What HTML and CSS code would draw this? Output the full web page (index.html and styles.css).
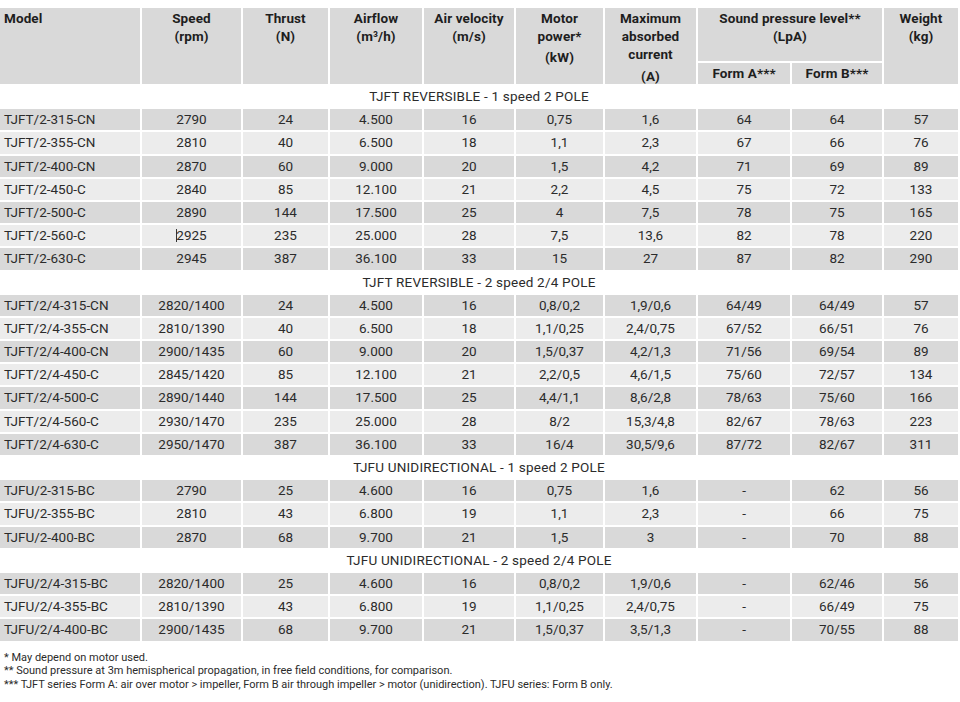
FILE: index.html
```html
<!DOCTYPE html>
<html lang="en">
<head>
<meta charset="utf-8">
<title>TJFT / TJFU jet fans – technical data</title>
<link rel="stylesheet" href="styles.css">
</head>
<body>
<div class="spec">
  <div class="grid">
    <div class="row head">
      <div class="cell hd model"><span class="l">Model</span></div>
      <div class="cell hd tall"><span class="l">Speed</span><span class="l">(rpm)</span></div>
      <div class="cell hd tall"><span class="l">Thrust</span><span class="l">(N)</span></div>
      <div class="cell hd tall"><span class="l">Airflow</span><span class="l">(m³/h)</span></div>
      <div class="cell hd tall"><span class="l">Air velocity</span><span class="l">(m/s)</span></div>
      <div class="cell hd tall"><span class="l">Motor</span><span class="l">power*</span><span class="l gap">(kW)</span></div>
      <div class="cell hd tall"><span class="l">Maximum</span><span class="l">absorbed</span><span class="l">current</span><span class="l gap2">(A)</span></div>
      <div class="cell hd wide"><span class="l">Sound pressure level**</span><span class="l">(LpA)</span></div>
      <div class="cell hd tall"><span class="l">Weight</span><span class="l">(kg)</span></div>
      <div class="cell hd sub">Form A***</div>
      <div class="cell hd sub">Form B***</div>
    </div>

    <div class="section">TJFT REVERSIBLE - 1 speed 2 POLE</div>
    <div class="row dark"><div class="cell model">TJFT/2-315-CN</div><div class="cell">2790</div><div class="cell">24</div><div class="cell">4.500</div><div class="cell">16</div><div class="cell">0,75</div><div class="cell">1,6</div><div class="cell">64</div><div class="cell">64</div><div class="cell">57</div></div>
    <div class="row light"><div class="cell model">TJFT/2-355-CN</div><div class="cell">2810</div><div class="cell">40</div><div class="cell">6.500</div><div class="cell">18</div><div class="cell">1,1</div><div class="cell">2,3</div><div class="cell">67</div><div class="cell">66</div><div class="cell">76</div></div>
    <div class="row dark"><div class="cell model">TJFT/2-400-CN</div><div class="cell">2870</div><div class="cell">60</div><div class="cell">9.000</div><div class="cell">20</div><div class="cell">1,5</div><div class="cell">4,2</div><div class="cell">71</div><div class="cell">69</div><div class="cell">89</div></div>
    <div class="row light"><div class="cell model">TJFT/2-450-C</div><div class="cell">2840</div><div class="cell">85</div><div class="cell">12.100</div><div class="cell">21</div><div class="cell">2,2</div><div class="cell">4,5</div><div class="cell">75</div><div class="cell">72</div><div class="cell">133</div></div>
    <div class="row dark"><div class="cell model">TJFT/2-500-C</div><div class="cell">2890</div><div class="cell">144</div><div class="cell">17.500</div><div class="cell">25</div><div class="cell">4</div><div class="cell">7,5</div><div class="cell">78</div><div class="cell">75</div><div class="cell">165</div></div>
    <div class="row light"><div class="cell model">TJFT/2-560-C</div><div class="cell"><span class="caret"></span>2925</div><div class="cell">235</div><div class="cell">25.000</div><div class="cell">28</div><div class="cell">7,5</div><div class="cell">13,6</div><div class="cell">82</div><div class="cell">78</div><div class="cell">220</div></div>
    <div class="row dark"><div class="cell model">TJFT/2-630-C</div><div class="cell">2945</div><div class="cell">387</div><div class="cell">36.100</div><div class="cell">33</div><div class="cell">15</div><div class="cell">27</div><div class="cell">87</div><div class="cell">82</div><div class="cell">290</div></div>

    <div class="section">TJFT REVERSIBLE - 2 speed 2/4 POLE</div>
    <div class="row dark"><div class="cell model">TJFT/2/4-315-CN</div><div class="cell">2820/1400</div><div class="cell">24</div><div class="cell">4.500</div><div class="cell">16</div><div class="cell">0,8/0,2</div><div class="cell">1,9/0,6</div><div class="cell">64/49</div><div class="cell">64/49</div><div class="cell">57</div></div>
    <div class="row light"><div class="cell model">TJFT/2/4-355-CN</div><div class="cell">2810/1390</div><div class="cell">40</div><div class="cell">6.500</div><div class="cell">18</div><div class="cell">1,1/0,25</div><div class="cell">2,4/0,75</div><div class="cell">67/52</div><div class="cell">66/51</div><div class="cell">76</div></div>
    <div class="row dark"><div class="cell model">TJFT/2/4-400-CN</div><div class="cell">2900/1435</div><div class="cell">60</div><div class="cell">9.000</div><div class="cell">20</div><div class="cell">1,5/0,37</div><div class="cell">4,2/1,3</div><div class="cell">71/56</div><div class="cell">69/54</div><div class="cell">89</div></div>
    <div class="row light"><div class="cell model">TJFT/2/4-450-C</div><div class="cell">2845/1420</div><div class="cell">85</div><div class="cell">12.100</div><div class="cell">21</div><div class="cell">2,2/0,5</div><div class="cell">4,6/1,5</div><div class="cell">75/60</div><div class="cell">72/57</div><div class="cell">134</div></div>
    <div class="row dark"><div class="cell model">TJFT/2/4-500-C</div><div class="cell">2890/1440</div><div class="cell">144</div><div class="cell">17.500</div><div class="cell">25</div><div class="cell">4,4/1,1</div><div class="cell">8,6/2,8</div><div class="cell">78/63</div><div class="cell">75/60</div><div class="cell">166</div></div>
    <div class="row light"><div class="cell model">TJFT/2/4-560-C</div><div class="cell">2930/1470</div><div class="cell">235</div><div class="cell">25.000</div><div class="cell">28</div><div class="cell">8/2</div><div class="cell">15,3/4,8</div><div class="cell">82/67</div><div class="cell">78/63</div><div class="cell">223</div></div>
    <div class="row dark"><div class="cell model">TJFT/2/4-630-C</div><div class="cell">2950/1470</div><div class="cell">387</div><div class="cell">36.100</div><div class="cell">33</div><div class="cell">16/4</div><div class="cell">30,5/9,6</div><div class="cell">87/72</div><div class="cell">82/67</div><div class="cell">311</div></div>

    <div class="section">TJFU UNIDIRECTIONAL - 1 speed 2 POLE</div>
    <div class="row dark"><div class="cell model">TJFU/2-315-BC</div><div class="cell">2790</div><div class="cell">25</div><div class="cell">4.600</div><div class="cell">16</div><div class="cell">0,75</div><div class="cell">1,6</div><div class="cell">-</div><div class="cell">62</div><div class="cell">56</div></div>
    <div class="row light"><div class="cell model">TJFU/2-355-BC</div><div class="cell">2810</div><div class="cell">43</div><div class="cell">6.800</div><div class="cell">19</div><div class="cell">1,1</div><div class="cell">2,3</div><div class="cell">-</div><div class="cell">66</div><div class="cell">75</div></div>
    <div class="row dark"><div class="cell model">TJFU/2-400-BC</div><div class="cell">2870</div><div class="cell">68</div><div class="cell">9.700</div><div class="cell">21</div><div class="cell">1,5</div><div class="cell">3</div><div class="cell">-</div><div class="cell">70</div><div class="cell">88</div></div>

    <div class="section">TJFU UNIDIRECTIONAL - 2 speed 2/4 POLE</div>
    <div class="row dark"><div class="cell model">TJFU/2/4-315-BC</div><div class="cell">2820/1400</div><div class="cell">25</div><div class="cell">4.600</div><div class="cell">16</div><div class="cell">0,8/0,2</div><div class="cell">1,9/0,6</div><div class="cell">-</div><div class="cell">62/46</div><div class="cell">56</div></div>
    <div class="row light"><div class="cell model">TJFU/2/4-355-BC</div><div class="cell">2810/1390</div><div class="cell">43</div><div class="cell">6.800</div><div class="cell">19</div><div class="cell">1,1/0,25</div><div class="cell">2,4/0,75</div><div class="cell">-</div><div class="cell">66/49</div><div class="cell">75</div></div>
    <div class="row dark"><div class="cell model">TJFU/2/4-400-BC</div><div class="cell">2900/1435</div><div class="cell">68</div><div class="cell">9.700</div><div class="cell">21</div><div class="cell">1,5/0,37</div><div class="cell">3,5/1,3</div><div class="cell">-</div><div class="cell">70/55</div><div class="cell">88</div></div>
  </div>

  <div class="notes">
    <p>* May depend on motor used.</p>
    <p>** Sound pressure at 3m hemispherical propagation, in free field conditions, for comparison.</p>
    <p>*** TJFT series Form A: air over motor &gt; impeller, Form B air through impeller &gt; motor (unidirection). TJFU series: Form B only.</p>
  </div>
</div>
</body>
</html>
```

FILE: styles.css
```css
html, body {
  margin: 0;
  padding: 0;
  background: #ffffff;
}

body {
  font-family: Roboto, "Liberation Sans", sans-serif;
  color: #2b2b2b;
}

.spec {
  padding-top: 8px;
  width: 958px;
}

.grid {
  display: grid;
  grid-template-columns: 140px 99px 85px 92px 90px 87px 91px 92px 90px 74px;
  grid-template-rows: 53px 21px;
  grid-auto-rows: 21.2px;
  column-gap: 2px;
  row-gap: 2px;
}

.row {
  display: contents;
}

.cell {
  font-size: 13.5px;
  letter-spacing: 0;
  line-height: 21.2px;
  text-align: center;
  white-space: nowrap;
  overflow: hidden;
}

.row.dark > .cell {
  background: #d9d9d9;
}

.row.light > .cell {
  background: #ececec;
}

.cell.model {
  text-align: left;
  padding-left: 4px;
}

/* header */
.row.head > .cell {
  background: #d9d9d9;
}

.hd {
  font-weight: 700;
  color: #1e1e1e;
  letter-spacing: 0.1px;
  line-height: 18px;
  padding-top: 1px;
  display: flex;
  flex-direction: column;
  align-items: center;
}

.hd.model {
  grid-row: span 2;
  align-items: flex-start;
}

.hd.tall {
  grid-row: span 2;
}

.hd.wide {
  grid-column: span 2;
}

.hd.sub {
  padding-top: 0;
  line-height: 21px;
  display: block;
}

.hd .l {
  display: block;
}

.hd .l.gap {
  margin-top: 3px;
}

.hd .l.gap2 {
  margin-top: 4px;
}

/* section titles */
.section {
  grid-column: 1 / -1;
  text-align: center;
  font-size: 13.5px;
  letter-spacing: 0.2px;
  line-height: 21.2px;
  color: #2b2b2b;
}

.caret {
  display: inline-block;
  width: 0;
  height: 13px;
  border-left: 1px solid #333;
  vertical-align: -2px;
  margin-right: -1px;
}

/* footnotes */
.notes {
  margin-top: 10px;
  padding-left: 4px;
  font-size: 11px;
  line-height: 13.5px;
  color: #2b2b2b;
}

.notes p {
  margin: 0;
}
```
